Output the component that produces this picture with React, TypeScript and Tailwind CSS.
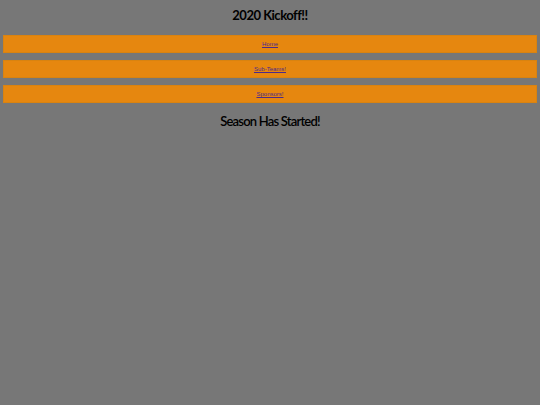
export default function App() {
  const links = ["Home", "Sub-Teams!", "Sponsors!"];
  return (
    <div className="min-h-[405px] w-full bg-[#777777] px-[3px] pt-[6px]">
      <h1 className="text-center text-[13px] font-bold leading-[18px] tracking-[-0.5px] text-black" style={{ fontFamily: "Lato, sans-serif" }}>
        2020 Kickoff!!
      </h1>
      <div className="mt-[11px] flex flex-col gap-[7px]">
        {links.map((l) => (
          <div key={l} className="flex h-[18px] items-center justify-center border border-[#d98310] bg-[#e6870f]">
            <a href="#" className="text-[6px] leading-none text-[#4b2a8a] underline" style={{ fontFamily: '"Liberation Sans", Arial, sans-serif' }}>
              {l}
            </a>
          </div>
        ))}
      </div>
      <h2 className="mt-[9px] text-center text-[13px] font-semibold leading-[18px] tracking-[-0.8px] text-black" style={{ fontFamily: "Lato, sans-serif" }}>
        Season Has Started!
      </h2>
    </div>
  );
}
